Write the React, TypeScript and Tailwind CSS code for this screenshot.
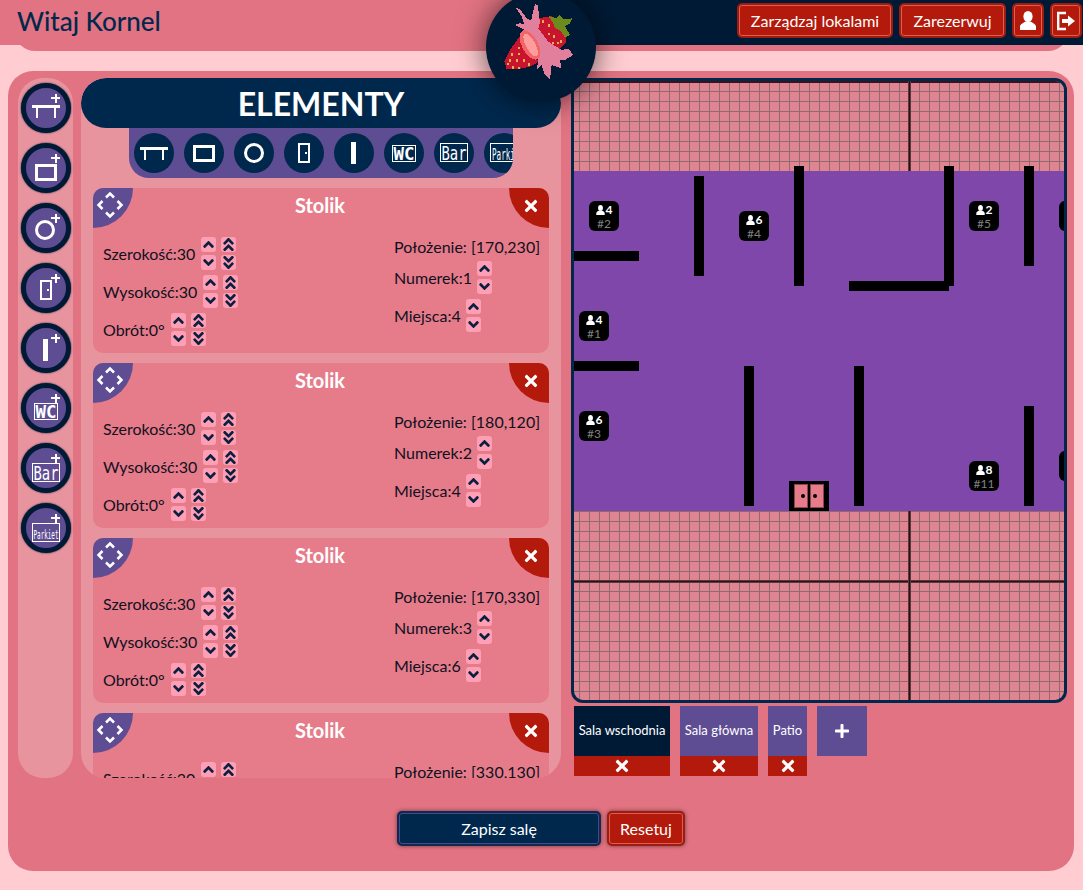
import { ReactNode } from 'react';
import { FaAngleDoubleDown, FaAngleDoubleUp, FaAngleDown, FaAngleUp, FaPlus, FaTimes } from 'react-icons/fa';

const ICON_KINDS = ['table', 'rect', 'circle', 'door', 'wall', 'wc', 'bar', 'parkiet'] as const;
type IconKind = (typeof ICON_KINDS)[number];

// przesuniecie ikony w dol w pasku bocznym
const SIDE_SHIFT: Record<IconKind, number> = { table: 3, rect: 4, circle: 2, door: 2, wall: 2, wc: 3, bar: 5, parkiet: 5 };

const MONO = "'DejaVu Sans Mono', monospace";

const ElementGlyph = ({ kind, side = false }: { kind: IconKind; side?: boolean }) => {
  const dy = side ? SIDE_SHIFT[kind] : 0;
  return (
    <svg width="40" height="40" viewBox="0 0 40 40" className="overflow-visible" shapeRendering="crispEdges">
      <g transform={`translate(0 ${dy})`} fill="none" stroke="#fff">
        {kind === 'table' && (
          <>
            <rect x="6" y="14" width="28" height="3" fill="#fff" stroke="none" />
            <rect x="10" y="15" width="2" height="12" fill="#fff" stroke="none" />
            <rect x="28" y="15" width="2" height="12" fill="#fff" stroke="none" />
          </>
        )}
        {kind === 'rect' && <rect x="10.5" y="13.5" width="19" height="14" strokeWidth="3" />}
        {kind === 'circle' && <circle cx={side ? 19 : 20} cy="20" r="8.5" strokeWidth="3" shapeRendering="auto" />}
        {kind === 'door' && (
          <>
            <rect x="15" y="11" width="10" height="18" strokeWidth="2" />
            <rect x="21" y="19" width="2" height="2" fill="#fff" stroke="none" />
          </>
        )}
        {kind === 'wall' && <rect x="17" y="9" width="5" height="22" fill="#fff" stroke="none" />}
        {kind === 'wc' && (
          <>
            <rect x="8.5" y="12.5" width="23" height="16" strokeWidth="1" />
            <text x="20" y="26.5" textAnchor="middle" fill="#fff" stroke="none" fontSize="17" fontWeight="bold" fontFamily={MONO} textLength="21" lengthAdjust="spacingAndGlyphs">WC</text>
          </>
        )}
        {kind === 'bar' && (
          <>
            <rect x="6.5" y="10.5" width="27" height="18" strokeWidth="1" />
            <text x="20" y="26.5" textAnchor="middle" fill="#fff" stroke="none" fontSize="19" fontFamily={MONO} textLength="25" lengthAdjust="spacingAndGlyphs">Bar</text>
          </>
        )}
        {kind === 'parkiet' &&
          (side ? (
            <>
              <rect x="6.5" y="10.5" width="27" height="18" strokeWidth="1" />
              <text x="20" y="26" textAnchor="middle" fill="#fff" stroke="none" fontSize="13" fontFamily={MONO} textLength="25" lengthAdjust="spacingAndGlyphs">Parkiet</text>
            </>
          ) : (
            <>
              <rect x="6.5" y="10.5" width="40" height="18" strokeWidth="1" />
              <text x="8" y="27" fill="#fff" stroke="none" fontSize="15" fontFamily={MONO} textLength="32" lengthAdjust="spacingAndGlyphs">Parkiet</text>
            </>
          ))}
      </g>
      {side && (
        <g fill="#fff">
          <rect x="25" y="9" width="9" height="2" />
          <rect x="28.5" y="5.5" width="2" height="9" />
        </g>
      )}
    </svg>
  );
};

const PersonIcon = ({ w, h }: { w: number; h: number }) => (
  <svg width={w} height={h} viewBox="0 0 16 19" fill="currentColor">
    <ellipse cx="8" cy="5.5" rx="4.6" ry="5.5" />
    <path d="M0 19v-3.5c0-2.5 3.5-3.5 5.5-5h5c2 1.500 5.500 2.500 5.500 5V19z" />
  </svg>
);

const LogoutIcon = () => (
  <svg width="20" height="20" viewBox="0 0 20 20" fill="none" stroke="currentColor">
    <path d="M10 2H2.200v16H10" strokeWidth="2.400" />
    <path d="M6 10h7" strokeWidth="4" />
    <path d="M12 4.500l7 5.500-7 5.500z" fill="currentColor" stroke="none" />
  </svg>
);

const TopButton = ({ children, className }: { children: ReactNode; className: string }) => (
  <button
    className={`h-[35px] flex items-center justify-center rounded-[5px] border-2 border-[#9d1c10] bg-[#b31a0b] text-white text-[16px] shadow-[inset_0_0_0_1px_#e25c50] ${className}`}
  >
    {children}
  </button>
);

const Spin = ({ double = false }: { double?: boolean }) => (
  <div className="flex flex-col gap-[3px]">
    <span className="w-[15px] h-[15px] rounded-[3px] bg-[#ff9fb5] flex items-center justify-center text-[#0b1f3f]">
      {double ? <FaAngleDoubleUp size={17} className="shrink-0" /> : <FaAngleUp size={17} className="shrink-0" />}
    </span>
    <span className="w-[15px] h-[15px] rounded-[3px] bg-[#ff9fb5] flex items-center justify-center text-[#0b1f3f]">
      {double ? <FaAngleDoubleDown size={17} className="shrink-0" /> : <FaAngleDown size={17} className="shrink-0" />}
    </span>
  </div>
);

const Field = ({ label, double = false }: { label: string; double?: boolean }) => (
  <div className={`flex items-center h-[33px] gap-[5px] ${double ? 'pr-0' : '-ml-0'}`}>
    <span className={double ? 'mr-[1px]' : ''}>{label}</span>
    <Spin />
    {double && <Spin double />}
  </div>
);

interface CardProps {
  x: number;
  y: number;
  num: number;
  seats: number;
}

const TableCard = ({ x, y, num, seats }: CardProps) => (
  <div className="shrink-0 h-[165px] rounded-[10px] bg-[#e67c8a] overflow-hidden text-[16px] text-[#10101f]">
    <div className="flex justify-between h-[40px]">
      <div className="w-[40px] h-[40px] bg-[#5f4d94] rounded-br-[40px]">
        <svg width="34" height="34" viewBox="0 0 34 34" fill="none" stroke="#fff" strokeWidth="2.5">
          <path d="M13 9.500l4-4 4 4M13 24.500l4 4 4-4M9.500 13l-4 4 4 4M24.500 13l4 4-4 4" />
        </svg>
      </div>
      <div className="flex-1 text-center text-white font-bold text-[20px] leading-[34px] pr-[2px]">Stolik</div>
      <div className="w-[40px] h-[40px] bg-[#b31a0b] rounded-bl-[40px] flex items-center justify-end pr-[9px] pb-[5px] text-white">
        <FaTimes size={18} className="shrink-0" />
      </div>
    </div>
    <div className="flex justify-between pl-[10px] pr-[10px] pt-[9px]">
      <div className="flex flex-col gap-[5px]">
        <Field label="Szerokość:30" double />
        <Field label="Wysokość:30" double />
        <Field label="Obrót:0°" double />
      </div>
      <div className="flex flex-col gap-[5px] w-[145px]">
        <div className="h-[19px] leading-[19px] whitespace-nowrap">Położenie: [{x},{y}]</div>
        <Field label={`Numerek:${num}`} />
        <Field label={`Miejsca:${seats}`} />
      </div>
    </div>
  </div>
);

const cards: CardProps[] = [
  { x: 170, y: 230, num: 1, seats: 4 },
  { x: 180, y: 120, num: 2, seats: 4 },
  { x: 170, y: 330, num: 3, seats: 6 },
  { x: 330, y: 130, num: 4, seats: 6 },
];

// pozycje na planie sali, liczone od lewego gornego rogu wnetrza
const walls = [
  { l: 0, t: 170, w: 65, h: 10 },
  { l: 120, t: 95, w: 10, h: 100 },
  { l: 220, t: 85, w: 10, h: 120 },
  { l: 370, t: 85, w: 10, h: 120 },
  { l: 275, t: 200, w: 100, h: 10 },
  { l: 450, t: 85, w: 10, h: 100 },
  { l: 0, t: 280, w: 65, h: 10 },
  { l: 170, t: 285, w: 10, h: 140 },
  { l: 280, t: 285, w: 10, h: 140 },
  { l: 450, t: 325, w: 10, h: 100 },
];

const tags = [
  { l: 15, t: 120, seats: 4, num: 2 },
  { l: 165, t: 130, seats: 6, num: 4 },
  { l: 395, t: 120, seats: 2, num: 5 },
  { l: 485, t: 120, seats: 4, num: 6 },
  { l: 5, t: 230, seats: 4, num: 1 },
  { l: 5, t: 330, seats: 6, num: 3 },
  { l: 395, t: 380, seats: 8, num: 11 },
  { l: 485, t: 370, seats: 4, num: 7 },
];

const Strawberry = () => (
  <svg width="90" height="80" viewBox="0 0 270 240" shapeRendering="crispEdges">
    <polygon points="130,55 170,48 190,70 215,95 212,130 190,152 150,130 125,90" fill="#c8142f" />
    <polygon points="160,48 185,55 195,45 205,58 232,55 225,70 210,78 225,105 210,112 195,90 180,85 175,70" fill="#6d8a1c" />
    <polygon points="75,108 132,185 105,200 70,207 35,207 28,185 45,150" fill="#c8142f" />
    <polygon
      points="62,22 75,28 95,55 108,62 120,12 128,15 135,68 130,85 160,125 200,150 220,145 235,165 210,180 195,180 200,205 185,200 170,195 165,237 150,225 140,195 125,208 130,180 100,130 90,90 60,75 75,70 88,72 80,50"
      fill="#e27f9c"
    />
    <ellipse cx="105" cy="135" rx="24" ry="48" transform="rotate(-28 105 135)" fill="#f4656a" />
    <ellipse cx="107" cy="135" rx="14" ry="38" transform="rotate(-28 107 135)" fill="#ff9c9c" />
    <g fill="#e8b04a">
      {[
        [142, 60], [158, 72], [160, 98], [175, 105], [185, 125], [170, 125], [195, 120],
        [68, 140], [48, 160], [68, 158], [85, 178], [42, 178], [62, 178], [35, 188], [52, 198], [68, 200], [98, 190],
      ].map(([x, y]) => (
        <rect key={`${x}-${y}`} x={x} y={y} width="6" height="8" />
      ))}
    </g>
  </svg>
);

const TabDelete = () => (
  <div className="h-[20px] bg-[#b31a0b] text-white flex items-center justify-center">
    <FaTimes size={18} className="shrink-0" />
  </div>
);

export default function App() {
  return (
    <div className="relative w-[1083px] h-[890px] overflow-hidden bg-[#ffccd1] font-['Lato',sans-serif]">
      {/* gorny pasek */}
      <header className="relative z-10 flex h-[45px]">
        <div className="w-[541px] bg-[#e27382] pl-[17px] text-[#00284d] text-[26px] leading-[42px] font-medium">Witaj Kornel</div>
        <nav className="flex-1 bg-[#001a35] flex justify-end items-start gap-[6px] pt-[3px] pr-[1px]">
          <TopButton className="w-[156px]">Zarządzaj lokalami</TopButton>
          <TopButton className="w-[107px]">Zarezerwuj</TopButton>
          <TopButton className="w-[32px]">
            <PersonIcon w={16} h={19} />
          </TopButton>
          <TopButton className="w-[32px]">
            <LogoutIcon />
          </TopButton>
        </nav>
      </header>
      <div className="-mt-[20px] mx-[15px] h-[26px] rounded-b-[20px] bg-[#e27382]" />

      <div className="absolute z-20 left-[486px] -top-[8px] w-[110px] h-[110px] rounded-full bg-[#001a35] shadow-[0_0_30px_rgba(0,0,0,0.65)] pl-[9px] pt-[8px]">
        <Strawberry />
      </div>

      <main className="mt-[20px] ml-[8px] w-[1066px] h-[800px] rounded-[25px] bg-[#e27382] pt-[7px]">
        <div className="flex h-[700px] pl-[10px]">
          {/* pasek dodawania */}
          <aside className="w-[55px] rounded-[25px] bg-[#e8949e] flex flex-col items-center gap-[10px] pt-[5px]">
            {ICON_KINDS.map((kind) => (
              <div key={kind} className="w-[50px] h-[50px] shrink-0 rounded-full border-[5px] border-[#001a35] bg-[#5f4d94] shadow-[0_0_2px_#001a35]">
                <ElementGlyph kind={kind} side />
              </div>
            ))}
          </aside>

          {/* lista elementow */}
          <section className="ml-[8px] w-[480px] rounded-[25px] bg-[#e8949e] overflow-hidden flex flex-col">
            <h1 className="h-[50px] shrink-0 rounded-[25px] bg-[#00284d] text-white text-center font-bold text-[32px] leading-[52px]">ELEMENTY</h1>
            <div className="mx-[48px] h-[50px] shrink-0 rounded-b-[20px] bg-[#5f4d94] overflow-hidden flex gap-[10px] pl-[5px] pt-[5px]">
              {ICON_KINDS.map((kind) => (
                <div key={kind} className="w-[40px] h-[40px] shrink-0 rounded-full bg-[#00284d]">
                  <ElementGlyph kind={kind} />
                </div>
              ))}
            </div>
            <div className="flex flex-col gap-[10px] px-[12px] pt-[10px]">
              {cards.map((c) => (
                <TableCard key={c.num} {...c} />
              ))}
            </div>
          </section>

          {/* plan sali */}
          <div className="ml-[10px] w-[496px] flex flex-col">
            <div className="relative shrink-0 h-[625px] border-[3px] border-[#00284d] rounded-[12px] overflow-hidden bg-[#df8592] bg-[linear-gradient(to_right,#8f6b70_1px,transparent_1px),linear-gradient(to_bottom,#8f6b70_1px,transparent_1px)] bg-[size:10px_10px] bg-[position:5px_0px]">
              <div className="absolute left-0 top-0 w-full h-[2px] bg-[#3a1219]" />
              <div className="absolute left-0 top-[499px] w-full h-[3px] border-y border-[#5a3a40] bg-[#2d0f14]" />
              <div className="absolute left-[334px] top-0 h-full w-[3px] border-x border-[#5a3a40] bg-[#2d0f14]" />
              <div className="absolute left-0 top-[90px] w-full h-[340px] bg-[#7e47a9]" />
              {walls.map((w) => (
                <div key={`${w.l}-${w.t}`} className="absolute bg-black" style={{ left: w.l, top: w.t, width: w.w, height: w.h }} />
              ))}
              <div className="absolute left-[215px] top-[400px] w-[40px] h-[30px] bg-black flex gap-[2px] pl-[5px] pt-[3px]">
                <div className="w-[14px] h-[24px] bg-[#e67c8a] border border-[#8a4750] flex items-center justify-end pr-[2px]">
                  <span className="w-[4px] h-[4px] rounded-full bg-black" />
                </div>
                <div className="w-[14px] h-[24px] bg-[#e67c8a] border border-[#8a4750] flex items-center pl-[2px]">
                  <span className="w-[4px] h-[4px] rounded-full bg-black" />
                </div>
              </div>
              {tags.map((t) => (
                <div key={t.num} className="absolute w-[30px] h-[30px] rounded-[6px] bg-black flex flex-col items-center text-[12px] leading-[15px] pt-[1px]" style={{ left: t.l, top: t.t }}>
                  <span className="flex items-center gap-[1px] text-white font-bold">
                    <PersonIcon w={9} h={10} />
                    {t.seats}
                  </span>
                  <span className="text-[#808080] -mt-[1px]">#{t.num}</span>
                </div>
              ))}
            </div>

            {/* zakladki sal */}
            <div className="flex gap-[10px] mt-[3px] pl-[3px] text-white text-[13px]">
              <div>
                <div className="h-[50px] w-[96px] bg-[#001a35] flex items-center justify-center">Sala wschodnia</div>
                <TabDelete />
              </div>
              <div>
                <div className="h-[50px] w-[78px] bg-[#5f4d94] flex items-center justify-center">Sala główna</div>
                <TabDelete />
              </div>
              <div>
                <div className="h-[50px] w-[39px] bg-[#5f4d94] flex items-center justify-center">Patio</div>
                <TabDelete />
              </div>
              <div className="h-[50px] w-[50px] bg-[#5f4d94] flex items-center justify-center">
                <FaPlus size={16} />
              </div>
            </div>
          </div>
        </div>

        <div className="flex justify-center gap-[6px] mt-[33px] text-white text-[16px]">
          <button className="w-[204px] h-[35px] rounded-[5px] border-2 border-[#12284f] bg-[#00284d] shadow-[inset_0_0_0_1px_#454a8c,0_0_4px_rgba(0,0,0,0.5)]">Zapisz salę</button>
          <button className="w-[78px] h-[35px] rounded-[5px] border-2 border-[#9d1c10] bg-[#b31a0b] shadow-[inset_0_0_0_1px_#e25c50,0_0_4px_rgba(0,0,0,0.5)]">Resetuj</button>
        </div>
      </main>
    </div>
  );
}
